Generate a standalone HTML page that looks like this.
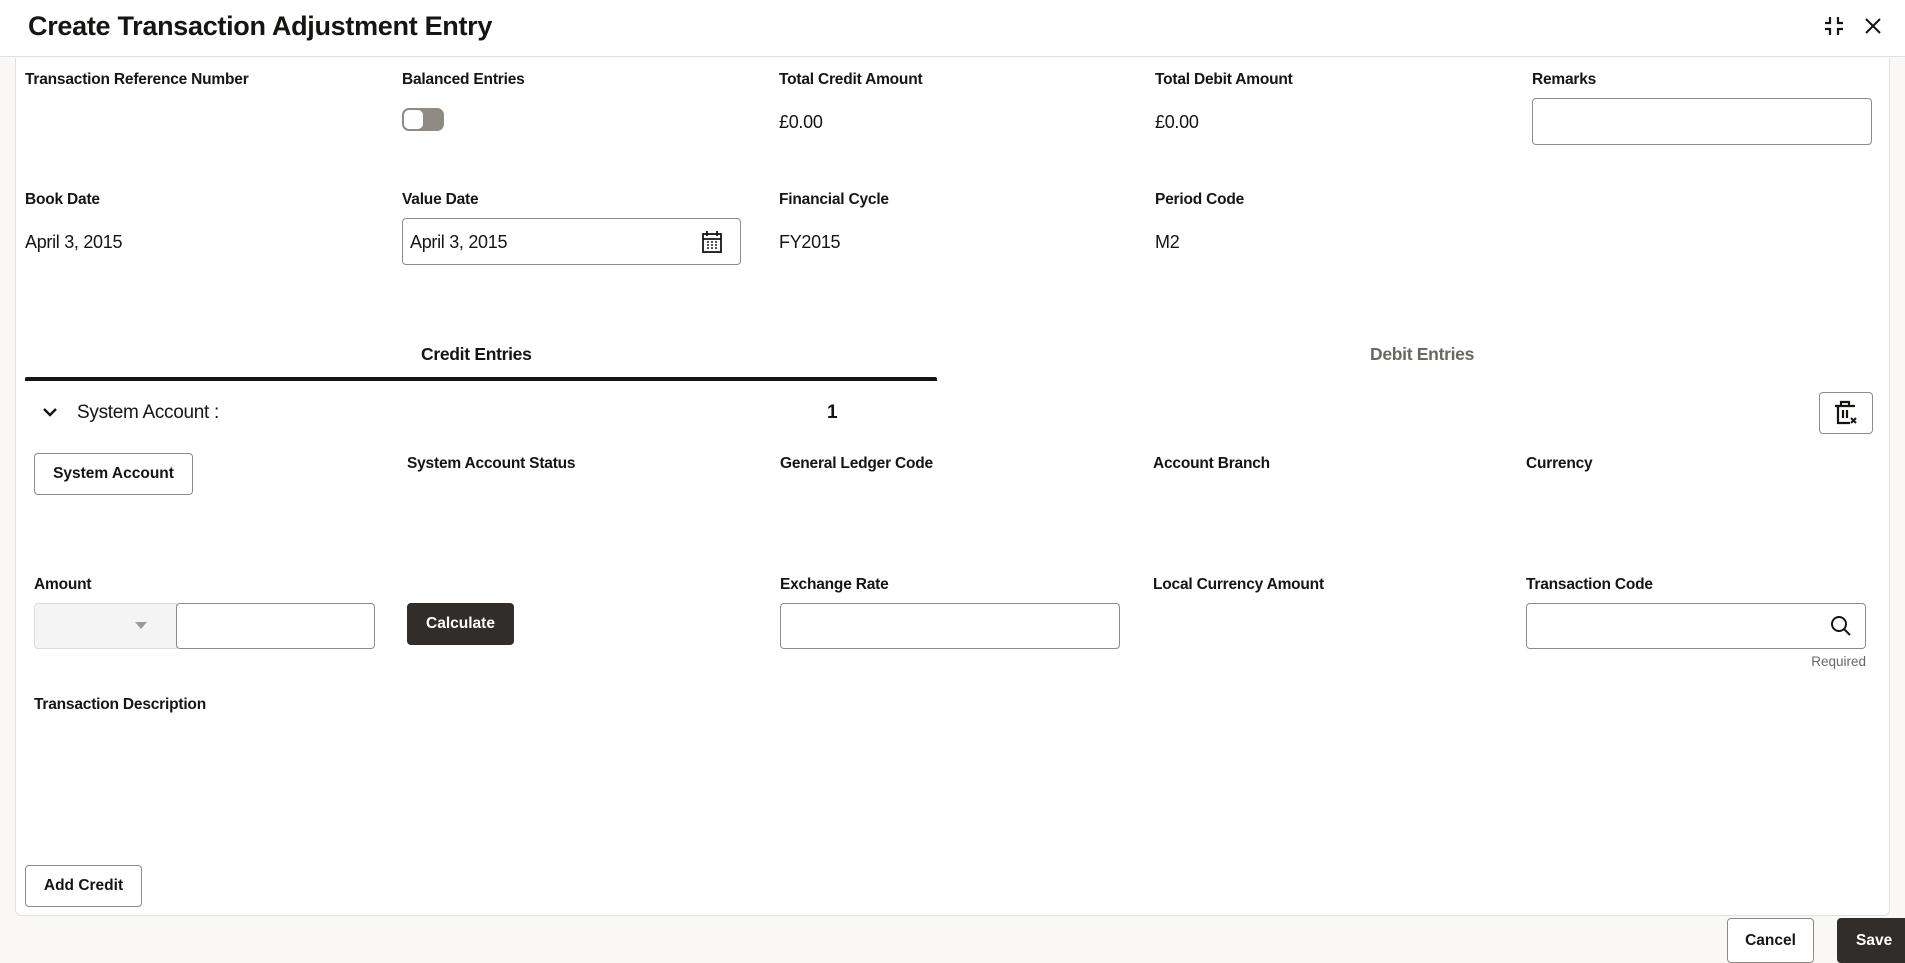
<!DOCTYPE html>
<html><head><meta charset="utf-8"><style>
*{box-sizing:border-box;margin:0;padding:0}
body{width:1905px;height:957px;overflow:hidden;background:#f9f8f7;font-family:"Liberation Sans",sans-serif;color:#161513;position:relative}
.hdr{position:absolute;left:0;top:0;width:1905px;height:57px;background:#fff;border-bottom:1px solid #e2e1df}
.title{position:absolute;left:28px;top:11px;font-size:27px;font-weight:bold;letter-spacing:-0.3px}
.panel{position:absolute;left:15px;top:58px;width:1875px;height:858px;background:#fff;border:1px solid #e2e1df;border-top:none;border-radius:0 0 6px 6px}
.a{position:absolute}
.lbl{position:absolute;font-size:15.5px;font-weight:bold;color:#161513;letter-spacing:-0.2px}
.val{position:absolute;font-size:18px;color:#161513;letter-spacing:-0.3px}
.inp{position:absolute;border:1px solid #8d8b88;border-radius:4px;background:#fff}
.btn{position:absolute;border:1px solid #8d8b88;border-radius:4px;background:#fff;font-size:15.5px;font-weight:bold;display:flex;align-items:center;justify-content:center}
</style></head><body>
<div class="hdr">
 <div class="title">Create Transaction Adjustment Entry</div>
 <svg class="a" style="left:1821px;top:13px" width="26" height="26" viewBox="0 0 26 26" fill="none" stroke="#161513" stroke-width="2.2"><path d="M4 10h5V4M22 10h-5V4M4 16h5v6M22 16h-5v6"/></svg>
 <svg class="a" style="left:1863px;top:16px" width="20" height="20" viewBox="0 0 20 20" stroke="#161513" stroke-width="2"><path d="M3 3l14 14M17 3L3 17"/></svg>
</div>
<div class="panel"></div>

<div class="lbl" style="left:25px;top:71px">Transaction Reference Number</div>
<div class="lbl" style="left:402px;top:71px">Balanced Entries</div>
<div class="lbl" style="left:779px;top:71px">Total Credit Amount</div>
<div class="lbl" style="left:1155px;top:71px">Total Debit Amount</div>
<div class="lbl" style="left:1532px;top:71px">Remarks</div>
<div class="a" style="left:402px;top:108px;width:42px;height:23px;border-radius:7px;background:#8f8a84"><div style="position:absolute;left:2px;top:2px;width:19px;height:19px;border-radius:5px;background:#fff"></div></div>
<div class="val" style="left:779px;top:112px">£0.00</div>
<div class="val" style="left:1155px;top:112px">£0.00</div>
<div class="inp" style="left:1532px;top:98px;width:340px;height:47px"></div>

<div class="lbl" style="left:25px;top:191px">Book Date</div>
<div class="lbl" style="left:402px;top:191px">Value Date</div>
<div class="lbl" style="left:779px;top:191px">Financial Cycle</div>
<div class="lbl" style="left:1155px;top:191px">Period Code</div>
<div class="val" style="left:25px;top:232px">April 3, 2015</div>
<div class="inp" style="left:402px;top:218px;width:339px;height:47px"></div>
<div class="val" style="left:410px;top:232px">April 3, 2015</div>
<svg class="a" style="left:701px;top:230px" width="22" height="24" viewBox="0 0 22 24" fill="none" stroke="#161513" stroke-width="1.8"><rect x="2" y="4" width="18" height="18"/><path d="M6 1v5M16 1v5M2 9h18"/><path d="M6 12h2M10 12h2M14 12h2M6 15h2M10 15h2M14 15h2M6 18h2M10 18h2M14 18h2" stroke-width="1.6"/></svg>
<div class="val" style="left:779px;top:232px">FY2015</div>
<div class="val" style="left:1155px;top:232px">M2</div>

<div class="val" style="left:421px;top:344px;font-weight:bold;font-size:17.5px">Credit Entries</div>
<div class="val" style="left:1370px;top:344px;font-size:17.5px;font-weight:bold;color:#6b6864">Debit Entries</div>
<div class="a" style="left:25px;top:377px;width:912px;height:4px;background:#161513;border-radius:2px 2px 0 0"></div>

<svg class="a" style="left:42px;top:406px" width="16" height="12" viewBox="0 0 16 12" fill="none" stroke="#161513" stroke-width="2.4"><path d="M2 3l6 6 6-6"/></svg>
<div class="val" style="left:77px;top:402px;font-size:19px">System Account :</div>
<div class="val" style="left:827px;top:402px;font-size:19px;font-weight:bold">1</div>
<div class="btn" style="left:1819px;top:392px;width:54px;height:42px"><svg width="26" height="26" viewBox="0 0 26 26" fill="none" stroke="#161513" stroke-width="2.2"><path d="M2 6h20M8 6V2h8v4M5 6v17h12M10 10v8M14 10v8"/><path d="M18 18l5 5M23 18l-5 5" stroke-width="2"/></svg></div>

<div class="btn" style="left:34px;top:453px;width:159px;height:42px">System Account</div>
<div class="lbl" style="left:407px;top:455px">System Account Status</div>
<div class="lbl" style="left:780px;top:455px">General Ledger Code</div>
<div class="lbl" style="left:1153px;top:455px">Account Branch</div>
<div class="lbl" style="left:1526px;top:455px">Currency</div>

<div class="lbl" style="left:34px;top:576px">Amount</div>
<div class="lbl" style="left:780px;top:576px">Exchange Rate</div>
<div class="lbl" style="left:1153px;top:576px">Local Currency Amount</div>
<div class="lbl" style="left:1526px;top:576px">Transaction Code</div>
<div class="a" style="left:34px;top:603px;width:143px;height:46px;background:#f4f4f4;border:1px solid #dcdcdc;border-radius:4px 0 0 4px"><div style="position:absolute;left:100px;top:18px;border-left:6px solid transparent;border-right:6px solid transparent;border-top:7px solid #9a9a9a"></div></div>
<div class="inp" style="left:176px;top:603px;width:199px;height:46px"></div>
<div class="btn" style="left:407px;top:603px;width:107px;height:42px;background:#312d2a;border-color:#312d2a;color:#fff">Calculate</div>
<div class="inp" style="left:780px;top:603px;width:340px;height:46px"></div>
<div class="inp" style="left:1526px;top:603px;width:340px;height:46px"></div>
<svg class="a" style="left:1829px;top:614px" width="24" height="24" viewBox="0 0 24 24" fill="none" stroke="#161513" stroke-width="2"><circle cx="10" cy="10" r="7"/><path d="M15 15l6 6"/></svg>
<div class="a" style="left:1800px;top:654px;width:66px;text-align:right;font-size:13.5px;color:#6b6864">Required</div>
<div class="lbl" style="left:34px;top:696px">Transaction Description</div>

<div class="btn" style="left:25px;top:865px;width:117px;height:42px">Add Credit</div>
<div class="btn" style="left:1727px;top:918px;width:87px;height:45px">Cancel</div>
<div class="btn" style="left:1837px;top:918px;width:72px;height:45px;background:#312d2a;border-color:#312d2a;color:#fff;justify-content:flex-start;padding-left:18px">Save</div>
</body></html>
